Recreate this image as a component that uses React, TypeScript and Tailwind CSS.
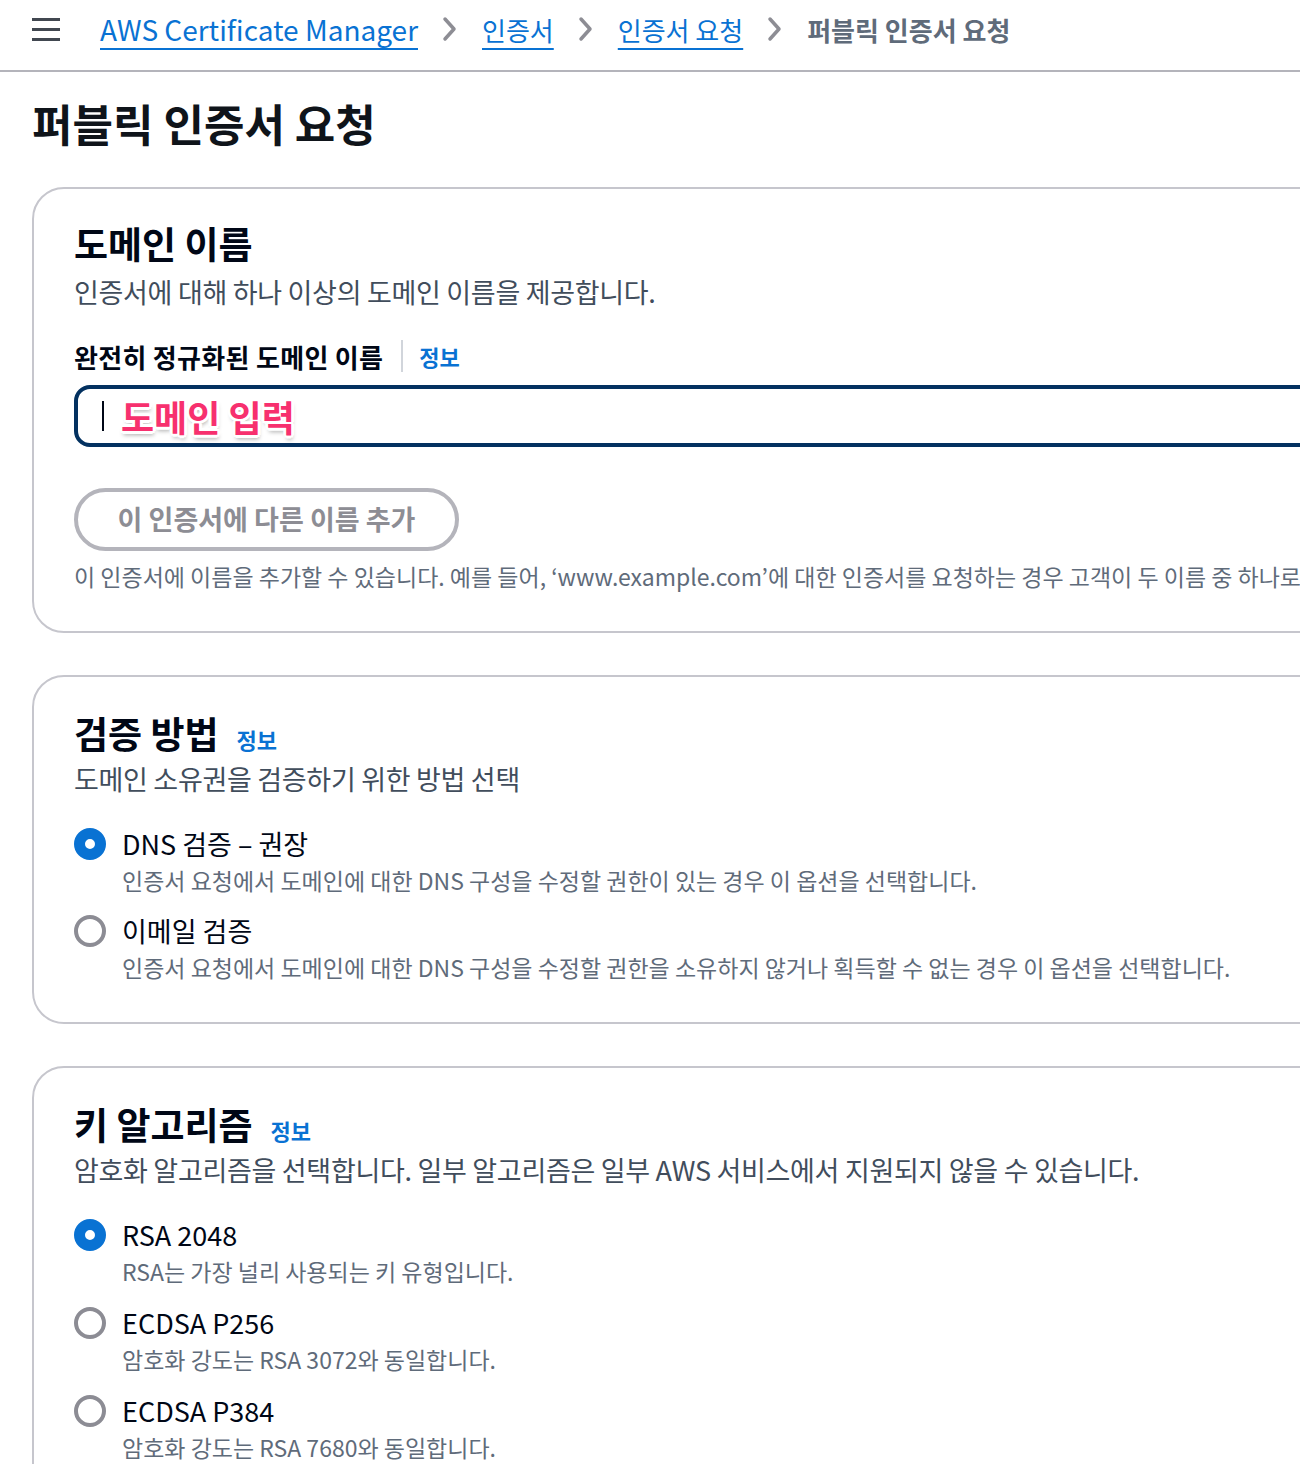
import React from "react";

function Chevron() {
  return (
    <svg width="16" height="26" viewBox="0 0 16 26" className="shrink-0">
      <path d="M3 3 L12 13 L3 23" fill="none" stroke="#8d8d94" strokeWidth="3.5" strokeLinecap="round" strokeLinejoin="round" />
    </svg>
  );
}

function Info() {
  return <span className="text-[22px] font-bold text-[#0972d3]">정보</span>;
}

function Radio({ checked }: { checked: boolean }) {
  return checked ? (
    <span className="w-8 h-8 rounded-full border-[11px] border-[#0972d3] bg-white shrink-0 box-border" />
  ) : (
    <span className="w-8 h-8 rounded-full border-4 border-[#8c8c94] bg-white shrink-0 box-border" />
  );
}

function Option({ checked, label, desc }: { checked: boolean; label: string; desc: string }) {
  return (
    <div className="flex flex-col">
      <div className="flex items-center h-[34px]">
        <Radio checked={checked} />
        <span className="ml-4 text-[27px] leading-[34px] text-[#000716]">{label}</span>
      </div>
      <div className="pl-12 mt-[3px] text-[23px] leading-[32px] text-[#5f6b7a] whitespace-nowrap">{desc}</div>
    </div>
  );
}

export default function App() {
  return (
    <div className="w-[1300px] h-[1464px] overflow-hidden bg-white font-['Noto_Sans_CJK_KR',sans-serif] text-[#000716]">
      {/* Header */}
      <div className="h-[72px] border-b-2 border-[#b4b4bb] flex items-center pl-8 pb-3">
        <div className="flex flex-col gap-[7px] w-7">
          <span className="h-[3px] bg-[#414750] block" />
          <span className="h-[3px] bg-[#414750] block" />
          <span className="h-[3px] bg-[#414750] block" />
        </div>
        <div className="ml-10 flex items-center text-[26px] whitespace-nowrap">
          <span className="text-[28px] text-[#0972d3] underline decoration-2 underline-offset-[7px]">AWS Certificate Manager</span>
          <span className="mx-6 flex"><Chevron /></span>
          <span className="text-[#0972d3] underline decoration-2 underline-offset-[7px]">인증서</span>
          <span className="mx-6 flex"><Chevron /></span>
          <span className="text-[#0972d3] underline decoration-2 underline-offset-[7px]">인증서 요청</span>
          <span className="mx-6 flex"><Chevron /></span>
          <span className="text-[#5f6b7a] font-bold">퍼블릭 인증서 요청</span>
        </div>
      </div>

      <div className="pl-8">
        <h1 className="mt-[25px] text-[44px] leading-[52px] font-bold text-[#0f141a]">퍼블릭 인증서 요청</h1>

        {/* Card 1 */}
        <div className="mt-[38px] w-[1420px] border-2 border-[#c6c6cd] rounded-[32px] pl-10 pt-8 pb-10">
          <h2 className="text-[37px] leading-[44px] font-bold">도메인 이름</h2>
          <p className="mt-[9px] text-[27px] leading-[36px] tracking-[-0.3px] text-[#414d5c]">인증서에 대해 하나 이상의 도메인 이름을 제공합니다.</p>
          <div className="mt-[30px] flex items-center h-8">
            <span className="text-[26px] font-bold tracking-[0.3px]">완전히 정규화된 도메인 이름</span>
            <span className="ml-[18px] w-[2px] h-8 bg-[#d1d5db]" />
            <span className="ml-4 flex"><Info /></span>
          </div>
          <div className="mt-[13px] h-[62px] border-4 border-[#033160] rounded-[16px] flex items-center pl-6">
            <span className="w-[2px] h-[30px] bg-[#000716]" />
            <span className="ml-[17px] text-[36px] font-bold text-[#f7306e] [text-shadow:-2px_-2px_0_#fff,2px_-2px_0_#fff,-2px_2px_0_#fff,2px_2px_0_#fff,0_3px_0_#fff,0_-3px_0_#fff,3px_0_0_#fff,-3px_0_0_#fff,1px_4px_4px_rgba(0,0,0,0.35)]">도메인 입력</span>
          </div>
          <div className="mt-[41px] w-[385px] h-[63px] border-4 border-[#b4b4bb] rounded-full flex items-center justify-center">
            <span className="text-[27px] font-bold text-[#8d8d94]">이 인증서에 다른 이름 추가</span>
          </div>
          <p className="mt-[10px] text-[23px] leading-[30px] text-[#5f6b7a] whitespace-nowrap">이 인증서에 이름을 추가할 수 있습니다. 예를 들어, ‘www.example.com’에 대한 인증서를 요청하는 경우 고객이 두 이름 중 하나로 연결할 수 있도록 ‘example.com’을 추가할 수 있습니다.</p>
        </div>

        {/* Card 2 */}
        <div className="mt-[42px] w-[1420px] border-2 border-[#c6c6cd] rounded-[32px] pl-10 pt-[34px] pb-[39px]">
          <div className="flex items-baseline h-[44px]">
            <h2 className="text-[37px] leading-[44px] font-bold">검증 방법</h2>
            <span className="ml-[18px]"><Info /></span>
          </div>
          <p className="mt-[6px] text-[27px] leading-[36px] tracking-[-0.3px] text-[#414d5c]">도메인 소유권을 검증하기 위한 방법 선택</p>
          <div className="mt-[30px] flex flex-col gap-[18px]">
            <Option checked label="DNS 검증 – 권장" desc="인증서 요청에서 도메인에 대한 DNS 구성을 수정할 권한이 있는 경우 이 옵션을 선택합니다." />
            <Option checked={false} label="이메일 검증" desc="인증서 요청에서 도메인에 대한 DNS 구성을 수정할 권한을 소유하지 않거나 획득할 수 없는 경우 이 옵션을 선택합니다." />
          </div>
        </div>

        {/* Card 3 */}
        <div className="mt-[42px] w-[1420px] border-2 border-[#c6c6cd] rounded-[32px] pl-10 pt-[34px] pb-[39px]">
          <div className="flex items-baseline h-[44px]">
            <h2 className="text-[37px] leading-[44px] font-bold">키 알고리즘</h2>
            <span className="ml-[18px]"><Info /></span>
          </div>
          <p className="mt-[6px] text-[27px] leading-[36px] tracking-[-0.3px] text-[#414d5c]">암호화 알고리즘을 선택합니다. 일부 알고리즘은 일부 AWS 서비스에서 지원되지 않을 수 있습니다.</p>
          <div className="mt-[30px] flex flex-col gap-[19px]">
            <Option checked label="RSA 2048" desc="RSA는 가장 널리 사용되는 키 유형입니다." />
            <Option checked={false} label="ECDSA P256" desc="암호화 강도는 RSA 3072와 동일합니다." />
            <Option checked={false} label="ECDSA P384" desc="암호화 강도는 RSA 7680와 동일합니다." />
          </div>
        </div>
      </div>
    </div>
  );
}
